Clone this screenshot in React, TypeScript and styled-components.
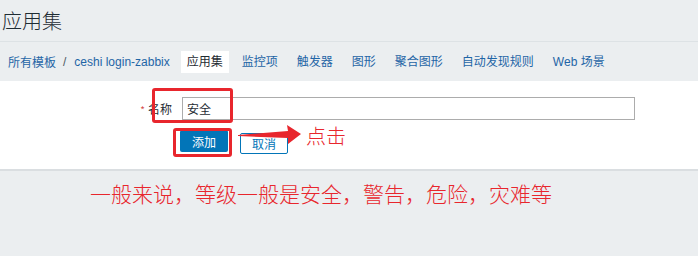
import React from 'react';
import styled, { createGlobalStyle } from 'styled-components';

const GlobalStyle = createGlobalStyle`
  body {
    margin: 0;
    background: #ebeef0;
    font-family: 'Liberation Sans', 'Noto Sans CJK SC', sans-serif;
  }
`;

const tabs = ['应用集', '监控项', '触发器', '图形', '聚合图形', '自动发现规则', 'Web 场景'];

const App = () => {
  return (
    <Page>
      <GlobalStyle />
      <Header>
        <Title>应用集</Title>
      </Header>
      <Nav>
        <Crumb>所有模板</Crumb>
        <Slash>/</Slash>
        <Crumb>ceshi login-zabbix</Crumb>
        <Tabs>
          {tabs.map((t, i) => (
            <Tab key={t} $active={i === 0}>
              {t}
            </Tab>
          ))}
        </Tabs>
      </Nav>
      <Panel>
        <FormRow>
          <Label>
            <Star>*</Star>名称
          </Label>
          <Input defaultValue="安全" />
        </FormRow>
        <ButtonRow>
          <PrimaryButton>添加</PrimaryButton>
          <GhostButton>取消</GhostButton>
        </ButtonRow>
        <Mark style={{ left: 152, top: 7, width: 75, height: 29 }} />
        <Mark style={{ left: 173, top: 47, width: 53, height: 23 }} />
        <Arrow width="64" height="22" viewBox="0 0 64 22">
          <polygon points="0,11 50,7 49,1 63,10 50,20 50,14 0,12" fill="#e8262d" />
        </Arrow>
        <Note>点击</Note>
      </Panel>
      <Remark>一般来说，等级一般是安全，警告，危险，灾难等</Remark>
    </Page>
  );
};

export default App;

const Page = styled.div`
  width: 698px;
  height: 256px;
  overflow: hidden;
`;

const Header = styled.div`
  height: 41px;
  border-bottom: 1px solid #dde2e5;
  display: flex;
  align-items: center;
  padding-left: 2px;
`;

const Title = styled.h1`
  margin: 0;
  font-size: 20px;
  font-weight: 300;
  color: #1f2c33;
  font-family: 'Noto Sans CJK SC', sans-serif;
`;

const Nav = styled.div`
  height: 39px;
  display: flex;
  align-items: center;
  padding-left: 8px;
  font-size: 12px;
  font-family: 'Liberation Sans', 'Noto Sans CJK SC', sans-serif;
`;

const Crumb = styled.span`
  color: #1f65a6;
`;

const Slash = styled.span`
  color: #4c5a63;
  margin: 0 8px 0 7px;
`;

const Tabs = styled.div`
  display: flex;
  gap: 7px;
  margin-left: 11px;
`;

const Tab = styled.span<{ $active?: boolean }>`
  padding: 0 6px;
  height: 22px;
  line-height: 22px;
  background: ${({ $active }) => ($active ? '#ffffff' : 'transparent')};
  color: ${({ $active }) => ($active ? '#1f2c33' : '#1f65a6')};
`;

const Panel = styled.div`
  position: relative;
  background: #ffffff;
  height: 90px;
  border-bottom: 2px solid #dadee1;
  padding-top: 16px;
  box-sizing: border-box;
`;

const FormRow = styled.div`
  display: flex;
  align-items: center;
`;

const Label = styled.label`
  width: 182px;
  text-align: right;
  font-size: 12px;
  color: #1f2c33;
  font-family: 'Noto Sans CJK SC', sans-serif;
  padding-right: 10px;
  box-sizing: border-box;
`;

const Star = styled.span`
  color: #d64e4e;
  font-size: 10px;
  margin-right: 3px;
`;

const Input = styled.input`
  width: 453px;
  height: 23px;
  box-sizing: border-box;
  border: 1px solid #acacac;
  padding: 0 4px;
  font-size: 12px;
  color: #1f2c33;
  font-family: 'Noto Sans CJK SC', sans-serif;
  outline: none;
`;

const ButtonRow = styled.div`
  display: flex;
  align-items: flex-start;
  gap: 12px;
  padding-left: 180px;
  margin-top: 10px;
`;

const PrimaryButton = styled.button`
  width: 48px;
  height: 22px;
  border: none;
  border-radius: 2px;
  background: #0275b8;
  color: #ffffff;
  font-size: 12px;
  font-family: 'Noto Sans CJK SC', sans-serif;
  padding: 0;
`;

const GhostButton = styled.button`
  width: 48px;
  height: 21px;
  margin-top: 3px;
  border: 1px solid #0275b8;
  border-radius: 2px;
  background: #ffffff;
  color: #0275b8;
  font-size: 12px;
  font-family: 'Noto Sans CJK SC', sans-serif;
  padding: 0;
`;

const Mark = styled.div`
  position: absolute;
  border: 3px solid #e8262d;
  border-radius: 3px;
`;

const Arrow = styled.svg`
  position: absolute;
  left: 238px;
  top: 43px;
`;

const Note = styled.span`
  position: absolute;
  left: 306px;
  top: 40px;
  font-size: 20px;
  font-weight: 300;
  color: #e8262d;
  font-family: 'Noto Sans CJK SC', sans-serif;
`;

const Remark = styled.div`
  margin: 7px 0 0 90px;
  font-size: 21px;
  font-weight: 300;
  color: #e8262d;
  font-family: 'Noto Sans CJK SC', sans-serif;
`;
